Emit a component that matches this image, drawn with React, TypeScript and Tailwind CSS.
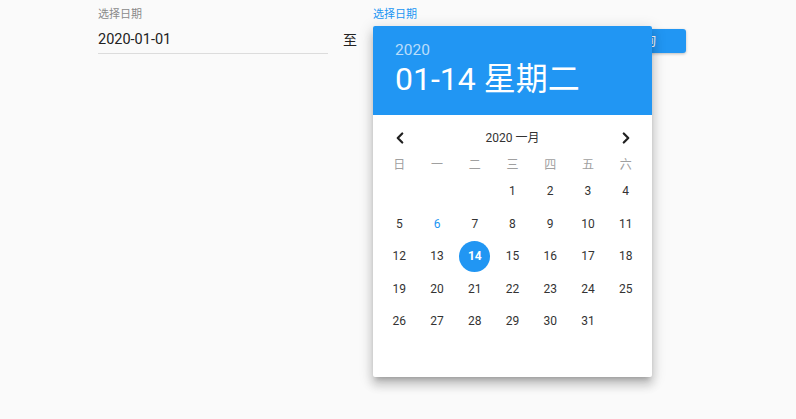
import { ChevronLeft, ChevronRight } from "lucide-react";

const font = { fontFamily: '"Roboto", "Noto Sans CJK SC", sans-serif' };

const weekdays = ["日", "一", "二", "三", "四", "五", "六"];

// January 2020 starts on a Wednesday
const cells: (number | null)[] = [
  ...Array(3).fill(null),
  ...Array.from({ length: 31 }, (_, i) => i + 1),
];

function DateField({ label, value, focused, width }: { label: string; value: string; focused?: boolean; width: string }) {
  return (
    <div className={`flex flex-col ${width}`}>
      <label className={`text-[11px] leading-[14px] ${focused ? "text-[#2196f3]" : "text-[#8a8a8a]"}`}>{label}</label>
      <div className={`mt-[8px] pb-[4px] border-b ${focused ? "border-[#2196f3]" : "border-[#dcdcdc]"}`}>
        <span className="block h-[19px] text-[14.5px] leading-[19px] text-[#222]">{value}</span>
      </div>
    </div>
  );
}

function DatePopover() {
  return (
    <div className="absolute left-[373px] top-[26px] w-[279px] h-[351px] bg-white rounded-[2px] overflow-hidden shadow-[0_5px_5px_-3px_rgba(0,0,0,0.2),0_8px_10px_1px_rgba(0,0,0,0.14),0_3px_14px_2px_rgba(0,0,0,0.12)]">
      <div className="h-[89px] bg-[#2196f3] pl-[22px] pt-[12px] text-white">
        <div className="text-[15.5px] leading-[24px] text-white/70">2020</div>
        <div className="text-[32px] leading-[38px] -mt-[2px]">01-14 星期二</div>
      </div>
      <div className="px-[7.5px]">
        <div className="mt-[11px] h-[24px] flex items-center justify-between px-[10px]">
          <ChevronLeft size={18} strokeWidth={3} className="text-[#222]" />
          <span className="text-[12px] text-[#333]">2020 一月</span>
          <ChevronRight size={18} strokeWidth={3} className="text-[#222]" />
        </div>
        <div className="mt-[5px] grid grid-cols-7 h-[20px] items-center">
          {weekdays.map((d) => (
            <span key={d} className="text-center text-[12px] text-[#a0a0a0]">{d}</span>
          ))}
        </div>
        <div className="grid grid-cols-7 auto-rows-[32.5px]">
          {cells.map((d, i) => (
            <div key={i} className="flex items-center justify-center">
              {d === 14 ? (
                <span className="w-[31px] h-[31px] rounded-full bg-[#2196f3] text-white font-bold text-[12px] flex items-center justify-center">
                  14
                </span>
              ) : d ? (
                <span className={`text-[12px] ${d === 6 ? "text-[#2196f3]" : "text-[#333]"}`}>{d}</span>
              ) : null}
            </div>
          ))}
        </div>
      </div>
    </div>
  );
}

export default function App() {
  return (
    <div className="relative w-full h-[419px] bg-[#fafafa] overflow-hidden" style={font}>
      <div className="flex items-start pl-[98px] pt-[8px]">
        <DateField label="选择日期" value="2020-01-01" width="w-[230px]" />
        <span className="ml-[15px] mt-[22px] text-[14px] leading-[20px] text-[#222]">至</span>
        <div className="ml-[16px]">
          <DateField label="选择日期" value="" focused width="w-[220px]" />
        </div>
        <button className="ml-[7px] mt-[21px] w-[86px] h-[24px] rounded-[3px] bg-[#2196f3] text-white text-[13px] shadow-[0_1px_3px_rgba(0,0,0,0.25)]">
          查询
        </button>
      </div>
      <DatePopover />
    </div>
  );
}
